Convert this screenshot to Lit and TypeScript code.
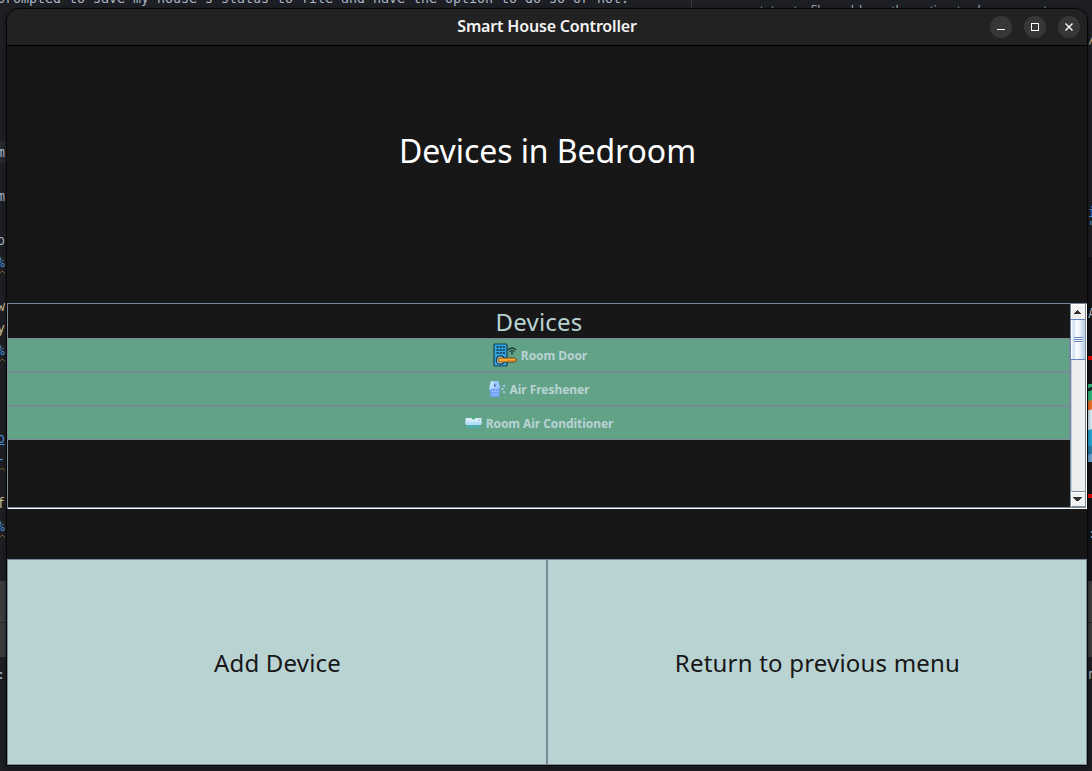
import { LitElement, html, css, svg } from "lit";
import { customElement } from "lit/decorators.js";

const doorIcon = svg`<svg width="24" height="26" viewBox="0 0 24 26">
  <rect x="1" y="2" width="13" height="22" rx="1" fill="#2fa9e2" stroke="#173c4c" stroke-width="1.200"/>
  <path d="M3.500 5h8.500M3.500 8h8.500M3.500 11h8.500" stroke="#1b4a66" stroke-width="1.800" stroke-dasharray="2.200 .9"/>
  <circle cx="7.500" cy="18" r="4.200" fill="#d4e4ec" stroke="#173440" stroke-width="1.200"/>
  <path d="M7 16h15l1.200 1v2l-1.200 1H7a2 2 0 0 1 0-4z" fill="#ffad32" stroke="#5b3c18" stroke-width=".9"/>
  <path d="M14 18.900h8" stroke="#b66a22" stroke-width=".8"/>
  <path d="M15 8q4-4 8 0M16.700 9.800q2.300-2.300 4.600 0" fill="none" stroke="#183b34" stroke-width="1.200"/>
  <path d="M17.800 10.500h2.500l-.6 2h-1.300z" fill="#183b34"/>
</svg>`;

const freshenerIcon = svg`<svg width="17" height="18" viewBox="0 0 17 18">
  <path d="M2 1h7.500l1.500 6-1 10H1.500L.5 8z" fill="#75a4fc"/>
  <path d="M2 1h3v7L.5 10V6z" fill="#b6dcff"/>
  <path d="M5 1h4.500l1.500 7-6 2z" fill="#9bc6fc"/>
  <rect x="5" y="4.500" width="1.500" height="1.800" fill="#2c4688"/>
  <path d="M3 11.500h1m1.500 0h1m1.500 0h1M3 14.500h1m1.500 0h1m1.500 0h1" stroke="#c2dcff"/>
  <path d="M12.500 9h2M14 6.500l2-1.200M14 11.500l2 1.200" stroke="#a2cdf4" stroke-width="1.800"/>
</svg>`;

const airConditionerIcon = svg`<svg width="17" height="18" viewBox="0 0 17 18">
  <path d="M.5 4h16v5q0 2-2 2h-12q-2 0-2-2z" fill="#d4eafb"/>
  <path d="M.5 8h16v1q0 2-2 2h-12q-2 0-2-2z" fill="#b2dff8"/>
  <path d="M6 3.500q2.500-2 5 0l-2.500 2.500z" fill="#42ad80"/>
  <path d="M13.500 6.500h1" stroke="#6b9bba"/>
  <path d="M2.500 11v3M4.500 11v3.500M6.500 11v3.500M8.500 11v3.500M10.500 11v3.500M12.500 11v3.500M14.500 11v3" stroke="#43b6c6"/>
</svg>`;

@customElement("editor-backdrop")
class EditorBackdrop extends LitElement {
  static styles = css`
    :host { display: block; position: absolute; inset: 0; overflow: hidden; background: #1e1f24;
      font: 13.33px/16px "DejaVu Sans Mono", monospace; color: #a9b5c4; white-space: pre; }
    .top { position: absolute; left: -3px; top: -9px; letter-spacing: -0.025px; }
    .top2 { position: absolute; left: 754px; top: 4px; font: 12px/14px "Noto Sans", sans-serif; word-spacing: 2px; }
    .divider { position: absolute; left: 691px; top: 0; width: 1px; height: 9px; background: #36383d; }
    .edge { position: absolute; top: 0; bottom: 0; left: 0; width: 6px; overflow: hidden; }
    .right { left: 1088px; width: 4px; }
    .tone { position: absolute; left: 0; width: 100%; }
    .active { top: 141px; height: 22px; background: #26282e; }
    .lower { top: 257px; height: 324px; background: #141518; }
    .panel { top: 581px; height: 76px; background: linear-gradient(#3b3c3e 0 41px, #27282a 41px 42px, #3b3c3e 42px); }
    .word { position: absolute; right: 1px; }
    .right .word { right: auto; left: 0; }
    .y145 { top: 145px; } .y189 { top: 189px; } .y233 { top: 233px; }
    .y255 { top: 255px; } .y299 { top: 299px; } .y321 { top: 321px; }
    .y343 { top: 343px; } .y431 { top: 431px; } .y452 { top: 452px; }
    .y496 { top: 496px; } .y519 { top: 519px; } .y667 { top: 667px; }
    .y205 { top: 205px; } .y219 { top: 219px; } .y306 { top: 306px; }
    .y31 { top: 31px; } .y526 { top: 526px; }
    .link { color: #4c91dd; }
    .gold { color: #c9bb92; }
    .wave { text-decoration: underline wavy #81652f 1px; text-underline-offset: 3px; }
    .red { position: absolute; top: 356px; width: 4px; height: 4px; background: #e40505; }
    .red2 { top: 494px; }
    .art { position: absolute; top: 384px; width: 4px; height: 78px;
      background: linear-gradient(165deg, #2db77b 0 4px, #152c29 4px 7px, #2db77b 7px 16px, #ee7026 17px 25px, #d7edf5 26px 44px, #27a6d5 45px 60px, #277eaa 61px 68px, #6aa7d5 69px); }
  `;
  render() {
    return html`
      <div class="top">prompted to save my house's status to file and have the option to do so or not.</div>
      <div class="divider"></div>
      <div class="top2">status to file and have the option to do so or not</div>
      <div class="edge">
        <div class="tone active"></div><div class="tone panel"></div>
        <span class="word y145">m</span><span class="word y189">m</span><span class="word y233">o</span>
        <span class="word link wave y255">%</span><span class="word gold y299">w</span>
        <span class="word gold y321">y</span><span class="word link wave y343">%</span>
        <span class="word link y431"><u>o</u></span><span class="word link wave y452">-</span>
        <span class="word gold y496">f</span><span class="word link wave y519">%</span>
        <span class="word y667">:</span>
      </div>
      <div class="edge right">
        <div class="tone lower"></div><div class="tone panel"></div>
        <span class="word gold y31">/</span><span class="word link y205">i</span><span class="word link y219">"</span>
        <span class="word y306">A</span><div class="red"></div><div class="art"></div><div class="red red2"></div>
        <span class="word y526">:</span><span class="word y667">n</span>
      </div>`;
  }
}

@customElement("scroll-rail")
class ScrollRail extends LitElement {
  static styles = css`
    :host { display: flex; flex-direction: column; box-sizing: border-box; width: 15px; background: #eee; border-left: 1px solid #7a8a99; box-shadow: inset 1px 0 #b8cfe5; }
    .arrow { display: flex; justify-content: center; align-items: center; box-sizing: border-box; height: 15px; padding-right: 2px; background: #f2f2f2; border-top: 1px solid #fff; border-left: 1px solid #fff; }
    .down { height: 16px; margin-top: auto; border-top: 1px solid #7a8a99; border-bottom: 1px solid #7a8a99; box-shadow: inset 0 1px #fff; }
    .thumb { box-sizing: border-box; height: 41px; margin-left: -1px; border: 1px solid #6382bf; border-right: 0; display: flex; align-items: center; justify-content: center;
      background: linear-gradient(90deg, #fff 0 1px, #c8ddf2 2px, #fff 6px, #b8cfe5); }
  `;
  render() {
    return html`
      <div class="arrow"><svg width="7" height="4" viewBox="0 0 7 4" shape-rendering="crispEdges"><path d="M3 0h1v1h1v1h1v1h1v1H0V3h1V2h1V1h1z" fill="#333"/></svg></div>
      <div class="thumb"><svg width="9" height="6" shape-rendering="crispEdges"><path d="M0 .5h9M0 2.500h9M0 4.500h9" stroke="#6382bf"/><path d="M1 1.500h8M1 3.500h8M1 5.500h8" stroke="#fff"/></svg></div>
      <div class="arrow down"><svg width="9" height="4" shape-rendering="crispEdges"><path d="M0 0h9v1H8v1H7v1H6v1H3V3H2V2H1V1H0z" fill="#333"/></svg></div>`;
  }
}

@customElement("app-root")
class AppRoot extends LitElement {
  static styles = css`
    :host { display: block; position: relative; width: 1092px; height: 771px; overflow: hidden; font-family: "Noto Sans", sans-serif; }
    .window { position: absolute; left: 6px; top: 8px; width: 1082px; height: 758px; box-sizing: border-box; border: 1px solid #050505;
      border-radius: 13px 13px 0 0; background: #171717; overflow: hidden; display: flex; flex-direction: column; }
    .shade { position: absolute; left: 6px; top: 8px; width: 1082px; height: 759px; border-radius: 13px 13px 0 0; box-shadow: 0 1px 4px rgba(0,0,0,.5); }
    .bar { box-sizing: border-box; flex: none; height: 37px; display: grid; grid-template-columns: 1fr auto 1fr; align-items: center; background: #222; border-bottom: 1px solid #000; }
    .name { grid-column: 2; color: #f3f3f3; font-size: 16px; font-weight: 600; line-height: 20px; letter-spacing: -0.18px; padding-bottom: 2px; white-space: nowrap; }
    .controls { display: flex; justify-content: flex-end; gap: 12px; padding-right: 7px; }
    .control { width: 22px; height: 22px; border-radius: 50%; background: #373737; }
    .control svg { display: block; }
    .heading { box-sizing: border-box; height: 206px; display: flex; align-items: center; justify-content: center; color: #fff; font-size: 32px; line-height: 44px; letter-spacing: -0.08px; padding: 4px 0 0 1px; }
    .list { box-sizing: border-box; height: 206px; margin: 51px 0 50px; display: flex; border: 1px solid #7a8a99; border-bottom: 0; border-right: 0; box-shadow: inset -1px 0 #fff, inset 0 -1px #fff; padding: 0 1px 1px 0; }
    .viewport { flex: 1; min-width: 0; display: flex; flex-direction: column; }
    .caption { box-sizing: border-box; height: 34px; display: flex; align-items: center; justify-content: center; color: #b9d3d3; font-size: 24px; letter-spacing: 0.2px; line-height: 34px; padding-top: 2px; }
    .device { box-sizing: border-box; height: 34px; display: flex; align-items: center; justify-content: center; gap: 4px; padding-left: 1px; background: #62a388; border: 1px solid #7a8a99; border-left: 0; color: #b9d3d3; font-size: 12px; font-weight: 700; letter-spacing: -0.06px; line-height: 16px; }
    .device:nth-child(2) { padding-left: 3px; }
    .device span { padding-top: 2px; }
    .device svg { display: block; flex: none; }
    .area { display: flex; flex: 1; border-right: 1px solid #7a8a99; border-bottom: 1px solid #7a8a99; }
    .actions { display: grid; grid-template-columns: 1fr 1fr; height: 206px; }
    .action { box-sizing: border-box; appearance: none; border: 1px solid #7a8a99; border-radius: 0; padding: 2px 0 0 1px; margin: 0; background: #b9d3d3; color: #171717; font: 24px/34px "Noto Sans", sans-serif; letter-spacing: 0.2px; }
  `;
  devices = [
    { name: "Room Door", icon: doorIcon },
    { name: "Air Freshener", icon: freshenerIcon },
    { name: "Room Air Conditioner", icon: airConditionerIcon },
  ];
  render() {
    return html`
      <editor-backdrop></editor-backdrop>
      <div class="shade"></div>
      <main class="window">
        <header class="bar">
          <div class="name">Smart House Controller</div>
          <div class="controls">
            <div class="control"><svg width="22" height="22"><path d="M7 13.500h8" stroke="#fff"/></svg></div>
            <div class="control"><svg width="22" height="22"><rect x="7.500" y="7.500" width="7" height="7" fill="none" stroke="#fff"/></svg></div>
            <div class="control"><svg width="22" height="22"><path d="M7.500 7.500l7 7m0-7l-7 7" stroke="#fff" stroke-width="1.400"/></svg></div>
          </div>
        </header>
        <div class="heading">Devices in Bedroom</div>
        <section class="list">
          <div class="area">
            <div class="viewport">
              <div class="caption">Devices</div>
              ${this.devices.map((d) => html`<div class="device">${d.icon}<span>${d.name}</span></div>`)}
            </div>
            <scroll-rail></scroll-rail>
          </div>
        </section>
        <nav class="actions">
          <button class="action">Add Device</button>
          <button class="action">Return to previous menu</button>
        </nav>
      </main>`;
  }
}
